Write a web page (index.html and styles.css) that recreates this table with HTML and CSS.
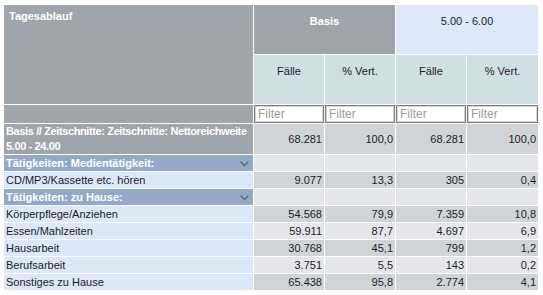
FILE: index.html
```html
<!DOCTYPE html>
<html lang="de">
<head>
<meta charset="utf-8">
<title>Tagesablauf</title>
<link rel="stylesheet" href="styles.css">
</head>
<body>
<table class="grid">
  <colgroup>
    <col class="col-label">
    <col class="col-num">
    <col class="col-num">
    <col class="col-num">
    <col class="col-num-last">
  </colgroup>
  <thead>
    <tr class="row-h1">
      <th class="corner" rowspan="2">Tagesablauf</th>
      <th class="grp-gray" colspan="2">Basis</th>
      <th class="grp-blue" colspan="2">5.00 - 6.00</th>
    </tr>
    <tr class="row-h2">
      <th class="sub">Fälle</th>
      <th class="sub">% Vert.</th>
      <th class="sub">Fälle</th>
      <th class="sub">% Vert.</th>
    </tr>
    <tr class="row-filter">
      <th class="filter-blank"></th>
      <td class="filter"><input type="text" placeholder="Filter"></td>
      <td class="filter"><input type="text" placeholder="Filter"></td>
      <td class="filter"><input type="text" placeholder="Filter"></td>
      <td class="filter"><input type="text" placeholder="Filter"></td>
    </tr>
  </thead>
  <tbody>
    <tr class="row-total dark">
      <td class="lbl-total"><div class="total-text">Basis // Zeitschnitte: Zeitschnitte: Nettoreichweite<br>5.00 - 24.00</div></td>
      <td class="num">68.281</td><td class="num">100,0</td><td class="num">68.281</td><td class="num">100,0</td>
    </tr>
    <tr class="row light">
      <td class="lbl-group"><div class="group-inner"><span>Tätigkeiten: Medientätigkeit:</span><svg class="chev" width="9" height="6" viewBox="0 0 9 6"><polyline points="0.7,0.8 4.5,4.6 8.3,0.8" fill="none" stroke="#55657a" stroke-width="1.3"/></svg></div></td>
      <td class="num"></td><td class="num"></td><td class="num"></td><td class="num"></td>
    </tr>
    <tr class="row dark">
      <td class="lbl-item">CD/MP3/Kassette etc. hören</td>
      <td class="num">9.077</td><td class="num">13,3</td><td class="num">305</td><td class="num">0,4</td>
    </tr>
    <tr class="row light">
      <td class="lbl-group"><div class="group-inner"><span>Tätigkeiten: zu Hause:</span><svg class="chev" width="9" height="6" viewBox="0 0 9 6"><polyline points="0.7,0.8 4.5,4.6 8.3,0.8" fill="none" stroke="#55657a" stroke-width="1.3"/></svg></div></td>
      <td class="num"></td><td class="num"></td><td class="num"></td><td class="num"></td>
    </tr>
    <tr class="row dark">
      <td class="lbl-item">Körperpflege/Anziehen</td>
      <td class="num">54.568</td><td class="num">79,9</td><td class="num">7.359</td><td class="num">10,8</td>
    </tr>
    <tr class="row light">
      <td class="lbl-item">Essen/Mahlzeiten</td>
      <td class="num">59.911</td><td class="num">87,7</td><td class="num">4.697</td><td class="num">6,9</td>
    </tr>
    <tr class="row dark">
      <td class="lbl-item">Hausarbeit</td>
      <td class="num">30.768</td><td class="num">45,1</td><td class="num">799</td><td class="num">1,2</td>
    </tr>
    <tr class="row light">
      <td class="lbl-item">Berufsarbeit</td>
      <td class="num">3.751</td><td class="num">5,5</td><td class="num">143</td><td class="num">0,2</td>
    </tr>
    <tr class="row dark">
      <td class="lbl-item">Sonstiges zu Hause</td>
      <td class="num">65.438</td><td class="num">95,8</td><td class="num">2.774</td><td class="num">4,1</td>
    </tr>
  </tbody>
</table>
</body>
</html>
```
FILE: styles.css
```css
html, body {
  margin: 0;
  padding: 0;
  background: #ffffff;
}

body {
  font-family: "Liberation Sans", Arial, sans-serif;
  font-size: 11px;
  color: #1c1c2a;
}

.grid {
  margin: 4px 0 0 3px;
  width: 536px;
  table-layout: fixed;
  border-collapse: separate;
  border-spacing: 1px;
  background: #ffffff;
}

.col-label { width: 249px; }
.col-num { width: 70px; }
.col-num-last { width: 71px; }

.grid th,
.grid td {
  padding: 0;
  overflow: hidden;
}

.grid th {
  font-weight: normal;
}

.row-h1 { height: 49px; }
.row-h2 { height: 49px; }
.row-filter { height: 18px; }
.row-total { height: 30px; }
.row { height: 16px; }

.grid .corner {
  background: #9fa5ac;
  color: #ffffff;
  font-weight: bold;
  text-align: left;
  vertical-align: top;
  line-height: 13px;
  padding: 5px 0 0 5px;
}

.grid .grp-gray {
  background: #9fa5ac;
  color: #ffffff;
  font-weight: bold;
  text-align: center;
  vertical-align: top;
  line-height: 13px;
  padding-top: 10px;
}

.grid .grp-blue {
  background: #dde8f8;
  color: #1c1c2a;
  text-align: center;
  vertical-align: top;
  line-height: 13px;
  padding-top: 10px;
}

.grid .sub {
  background: #d0dfe3;
  color: #1c1c2a;
  text-align: center;
  vertical-align: top;
  line-height: 13px;
  padding-top: 10px;
}

.grid .filter-blank {
  background: #9fa5ac;
}

.grid .filter {
  background: #ffffff;
  vertical-align: top;
}

.filter input {
  display: block;
  box-sizing: border-box;
  width: 100%;
  height: 18px;
  margin: 0;
  padding: 0 3px;
  border: 1px solid #7a7a7a;
  box-shadow: inset 0 0 0 1px #d6d6d6;
  border-radius: 0;
  background: #ffffff;
  font-family: "Liberation Sans", Arial, sans-serif;
  font-size: 12px;
  color: #333;
  outline: none;
}

.filter input::placeholder {
  color: #9a9a9a;
}

.grid .lbl-total {
  background: #9fa5ac;
  color: #ffffff;
  font-weight: bold;
  vertical-align: top;
  padding-left: 2px;
}

.total-text {
  height: 30px;
  line-height: 15px;
  white-space: nowrap;
  letter-spacing: -0.38px;
}

.grid .lbl-group {
  background: #94a9c8;
  color: #ffffff;
  font-weight: bold;
  line-height: 16px;
  padding: 0 4px 0 2px;
}

.group-inner {
  display: flex;
  align-items: center;
  justify-content: space-between;
  height: 16px;
}

.chev {
  display: block;
  margin-top: 1px;
}

.grid .lbl-item {
  background: #dce7f8;
  color: #1c1c2a;
  line-height: 16px;
  padding-left: 2px;
  white-space: nowrap;
}

.grid .num {
  text-align: right;
  vertical-align: middle;
  line-height: 16px;
  padding-right: 2px;
  white-space: nowrap;
}

.grid .dark .num { background: #d1d4d7; }
.grid .light .num { background: #e4e6e9; }
```
